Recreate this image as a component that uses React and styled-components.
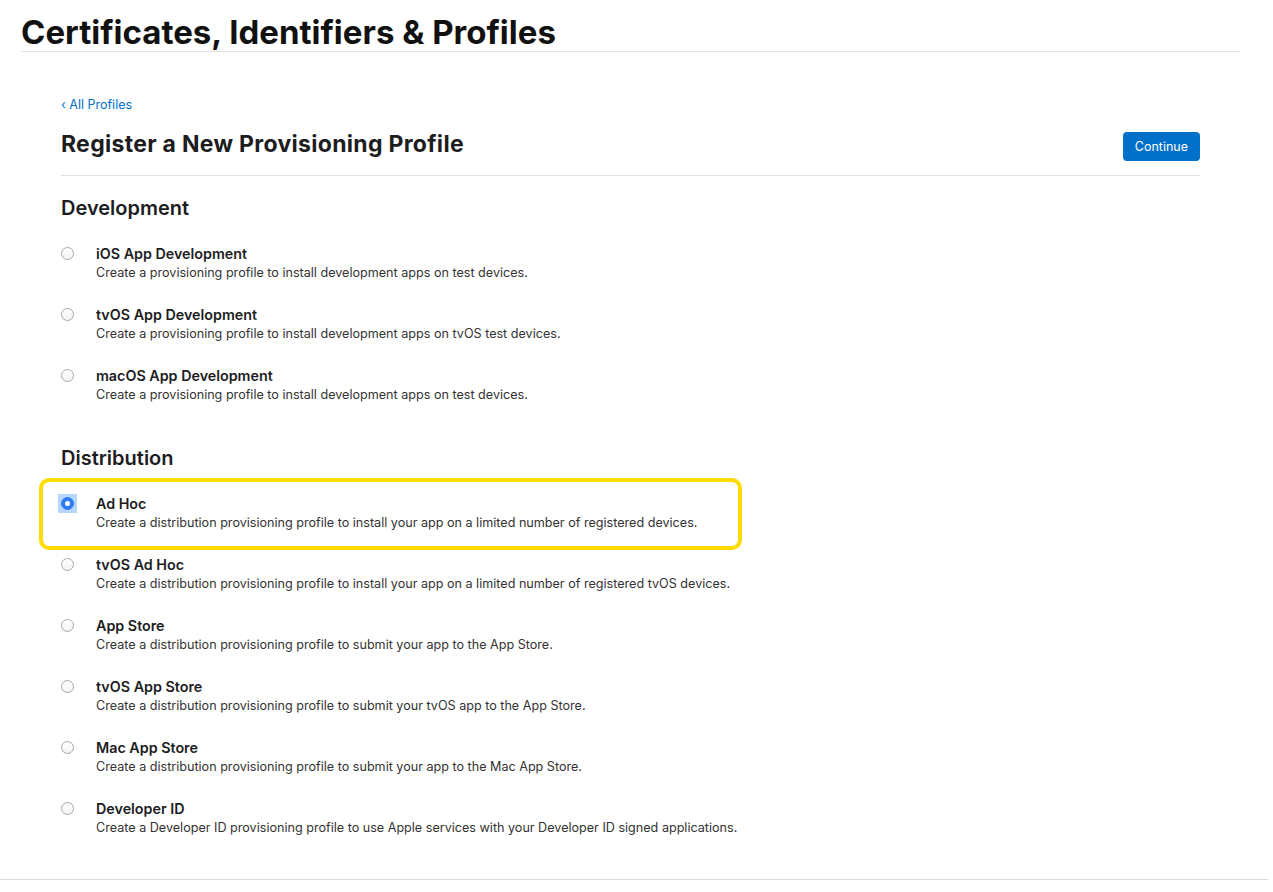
import React from "react";
import styled, { createGlobalStyle } from "styled-components";

const Global = createGlobalStyle`
  html, body { margin: 0; padding: 0; background: #fff; }
  body { font-family: Inter, "Noto Sans", "Liberation Sans", sans-serif; color: #1d1d1f; -webkit-font-smoothing: antialiased; }
`;

const Page = styled.div`
  display: flex;
  flex-direction: column;
  min-height: 892px;
`;

const TopBar = styled.header`
  margin: 0 33px 0 21px;
  padding-top: 13px;
  border-bottom: 1px solid #e2e2e2;
`;

const SiteTitle = styled.h1`
  margin: 0;
  font-size: 33px;
  line-height: 38px;
  font-weight: 700;
  color: #111;
`;

const Main = styled.main`
  margin: 0 73px 0 61px;
  padding-top: 41px;
  flex: 1;
`;

const BackLink = styled.a`
  display: inline-block;
  font-size: 12.5px;
  line-height: 16px;
  color: #0070c9;
  text-decoration: none;
`;

const TitleRow = styled.div`
  display: flex;
  align-items: flex-start;
  justify-content: space-between;
  padding: 16px 0 14px;
  border-bottom: 1px solid #dedede;
`;

const PageTitle = styled.h2`
  margin: 0;
  font-size: 23px;
  line-height: 30px;
  font-weight: 700;
  letter-spacing: 0.3px;
  color: #1d1d1f;
`;

const PrimaryButton = styled.button`
  font-family: inherit;
  background: #0070c9;
  color: #fff;
  border: none;
  border-radius: 4px;
  font-size: 12.5px;
  height: 29px;
  padding: 0 12px;
  margin-top: 3px;
`;

const Section = styled.section`
  padding-top: ${(p) => p.$top}px;
`;

const SectionTitle = styled.h3`
  margin: 0 0 23px;
  font-size: 20px;
  line-height: 26px;
  font-weight: 600;
  color: #1d1d1f;
`;

const List = styled.div`
  display: flex;
  flex-direction: column;
  gap: 23px;
`;

const Option = styled.label`
  position: relative;
  display: flex;
  gap: 22px;
  align-items: flex-start;
  cursor: pointer;
  ${(p) =>
    p.$highlight &&
    `
    &::after {
      content: "";
      position: absolute;
      left: -22px;
      top: -16px;
      width: 703px;
      height: 72px;
      box-sizing: border-box;
      border: 4px solid #ffdc00;
      border-radius: 10px;
      pointer-events: none;
    }
  `}
`;

const RadioWrap = styled.span`
  flex: none;
  width: 19px;
  height: 19px;
  margin: 0 -3px 0 -3px;
  display: flex;
  align-items: center;
  justify-content: center;
  background: ${(p) => (p.$focus ? "#b6d6fb" : "transparent")};
`;

const Radio = styled.span`
  width: 13px;
  height: 13px;
  box-sizing: border-box;
  border-radius: 50%;
  border: 1px solid ${(p) => (p.$checked ? "#2f7cf6" : "#a8a8a8")};
  background: ${(p) => (p.$checked ? "#2f7cf6" : "linear-gradient(#fff, #f3f3f3)")};
  display: flex;
  align-items: center;
  justify-content: center;
  &::after {
    content: "";
    display: ${(p) => (p.$checked ? "block" : "none")};
    width: 5px;
    height: 5px;
    border-radius: 50%;
    background: #fff;
  }
`;

const Texts = styled.span`
  display: flex;
  flex-direction: column;
`;

const OptionTitle = styled.span`
  font-size: 14.3px;
  line-height: 19px;
  font-weight: 600;
  color: #1d1d1f;
`;

const OptionDesc = styled.span`
  font-size: 12.6px;
  line-height: 19px;
  color: #333;
`;

const Footer = styled.footer`
  margin-right: 5px;
  border-top: 1px solid #dcdcdc;
  height: 12px;
`;

const dev = [
  ["iOS App Development", "Create a provisioning profile to install development apps on test devices."],
  ["tvOS App Development", "Create a provisioning profile to install development apps on tvOS test devices."],
  ["macOS App Development", "Create a provisioning profile to install development apps on test devices."],
];

const dist = [
  ["Ad Hoc", "Create a distribution provisioning profile to install your app on a limited number of registered devices.", true],
  ["tvOS Ad Hoc", "Create a distribution provisioning profile to install your app on a limited number of registered tvOS devices."],
  ["App Store", "Create a distribution provisioning profile to submit your app to the App Store."],
  ["tvOS App Store", "Create a distribution provisioning profile to submit your tvOS app to the App Store."],
  ["Mac App Store", "Create a distribution provisioning profile to submit your app to the Mac App Store."],
  ["Developer ID", "Create a Developer ID provisioning profile to use Apple services with your Developer ID signed applications."],
];

function Row({ title, desc, checked }) {
  return (
    <Option $highlight={checked}>
      <RadioWrap $focus={checked}>
        <Radio $checked={checked} />
      </RadioWrap>
      <Texts>
        <OptionTitle>{title}</OptionTitle>
        <OptionDesc>{desc}</OptionDesc>
      </Texts>
    </Option>
  );
}

export default function App() {
  return (
    <Page>
      <Global />
      <TopBar>
        <SiteTitle>Certificates, Identifiers &amp; Profiles</SiteTitle>
      </TopBar>
      <Main>
        <BackLink href="#">‹ All Profiles</BackLink>
        <TitleRow>
          <PageTitle>Register a New Provisioning Profile</PageTitle>
          <PrimaryButton>Continue</PrimaryButton>
        </TitleRow>
        <Section $top={19}>
          <SectionTitle>Development</SectionTitle>
          <List>
            {dev.map(([t, d]) => (
              <Row key={t} title={t} desc={d} />
            ))}
          </List>
        </Section>
        <Section $top={41}>
          <SectionTitle>Distribution</SectionTitle>
          <List>
            {dist.map(([t, d, c]) => (
              <Row key={t} title={t} desc={d} checked={!!c} />
            ))}
          </List>
        </Section>
      </Main>
      <Footer />
    </Page>
  );
}
